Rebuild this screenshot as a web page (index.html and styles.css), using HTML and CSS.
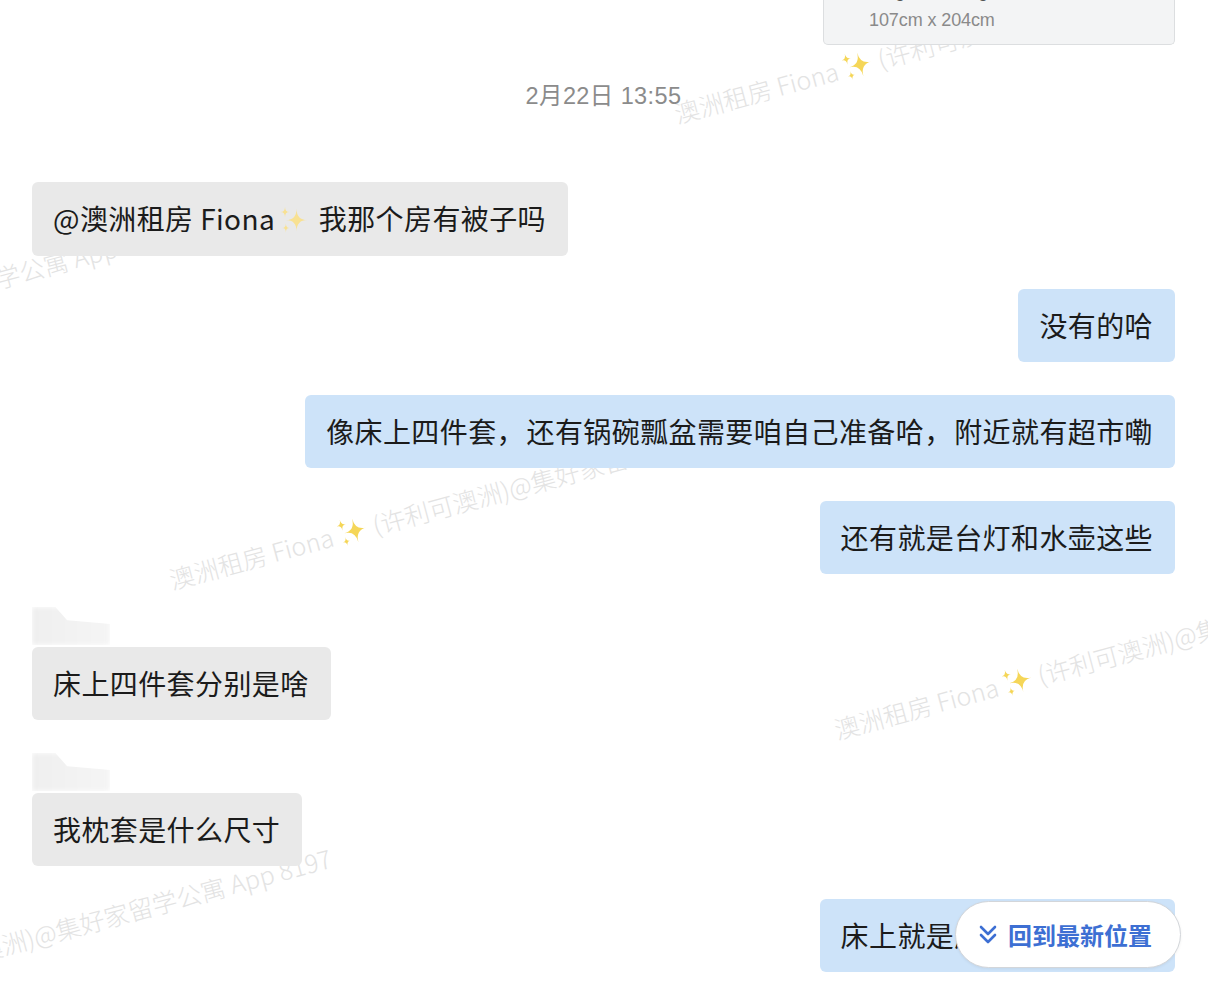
FILE: index.html
```html
<!DOCTYPE html>
<html lang="zh-CN">
<head>
  <meta charset="UTF-8" />
  <meta name="viewport" content="width=device-width, initial-scale=1.0"/>
  <title>聊天记录</title>
  <link rel="stylesheet" href="styles.css">
</head>
<body>

<div class="page">

  <!-- watermark tiles, sit behind the chat -->
  <div class="watermark">
    <div class="wm" style="left:675px; top:97px">澳洲租房 Fiona<svg class="spark" viewBox="0 0 36 36"><path d="M22 5Q22 18 34 18Q22 18 22 31Q22 18 10 18Q22 18 22 5Z"/><path d="M9 3Q9 9 14 9Q9 9 9 15Q9 9 4 9Q9 9 9 3Z"/><path d="M10 22Q10 27 14 27Q10 27 10 32Q10 27 6 27Q10 27 10 22Z"/></svg> (许利可澳洲)@集好家留学公寓 App 8197</div>
    <div class="wm" style="left:-462px; top:385px">澳洲租房 Fiona<svg class="spark" viewBox="0 0 36 36"><path d="M22 5Q22 18 34 18Q22 18 22 31Q22 18 10 18Q22 18 22 5Z"/><path d="M9 3Q9 9 14 9Q9 9 9 15Q9 9 4 9Q9 9 9 3Z"/><path d="M10 22Q10 27 14 27Q10 27 10 32Q10 27 6 27Q10 27 10 22Z"/></svg> (许利可澳洲)@集好家留学公寓 App 8197</div>
    <div class="wm" style="left:170px; top:563px">澳洲租房 Fiona<svg class="spark" viewBox="0 0 36 36"><path d="M22 5Q22 18 34 18Q22 18 22 31Q22 18 10 18Q22 18 22 5Z"/><path d="M9 3Q9 9 14 9Q9 9 9 15Q9 9 4 9Q9 9 9 3Z"/><path d="M10 22Q10 27 14 27Q10 27 10 32Q10 27 6 27Q10 27 10 22Z"/></svg> (许利可澳洲)@集好家留学公寓 App 8197</div>
    <div class="wm" style="left:835px; top:713px">澳洲租房 Fiona<svg class="spark" viewBox="0 0 36 36"><path d="M22 5Q22 18 34 18Q22 18 22 31Q22 18 10 18Q22 18 22 5Z"/><path d="M9 3Q9 9 14 9Q9 9 9 15Q9 9 4 9Q9 9 9 3Z"/><path d="M10 22Q10 27 14 27Q10 27 10 32Q10 27 6 27Q10 27 10 22Z"/></svg> (许利可澳洲)@集好家留学公寓 App 8197</div>
    <div class="wm" style="left:-305px; top:1011px">澳洲租房 Fiona<svg class="spark" viewBox="0 0 36 36"><path d="M22 5Q22 18 34 18Q22 18 22 31Q22 18 10 18Q22 18 22 5Z"/><path d="M9 3Q9 9 14 9Q9 9 9 15Q9 9 4 9Q9 9 9 3Z"/><path d="M10 22Q10 27 14 27Q10 27 10 32Q10 27 6 27Q10 27 10 22Z"/></svg> (许利可澳洲)@集好家留学公寓 App 8197</div>
  </div>

  <div class="chat">

    <div class="row right">
      <div class="card">
        <div class="card-title">Single bedding</div>
        <div class="card-size">107cm x 204cm</div>
      </div>
    </div>

    <div class="time">2月22日 13:55</div>

    <div class="row left first">
      <div class="bubble">@澳洲租房 Fiona<svg class="emoji" viewBox="0 0 36 36"><path d="M22 5Q22 18 34 18Q22 18 22 31Q22 18 10 18Q22 18 22 5Z"/><path d="M9 3Q9 9 14 9Q9 9 9 15Q9 9 4 9Q9 9 9 3Z"/><path d="M10 22Q10 27 14 27Q10 27 10 32Q10 27 6 27Q10 27 10 22Z"/></svg> 我那个房有被子吗</div>
    </div>

    <div class="row right">
      <div class="bubble">没有的哈</div>
    </div>

    <div class="row right">
      <div class="bubble">像床上四件套<span class="punct">，</span>还有锅碗瓢盆需要咱自己准备哈<span class="punct">，</span>附近就有超市嘞</div>
    </div>

    <div class="row right">
      <div class="bubble">还有就是台灯和水壶这些</div>
    </div>

    <div class="row left">
      <div class="sender"></div>
      <div class="bubble">床上四件套分别是啥</div>
    </div>

    <div class="row left">
      <div class="sender"></div>
      <div class="bubble">我枕套是什么尺寸</div>
    </div>

    <div class="row right">
      <div class="bubble">床上就是床单被罩枕套哈</div>
    </div>

  </div>

  <button class="latest">
    <svg viewBox="0 0 20 22"><path d="M3 3l7 7 7-7M3 11l7 7 7-7"/></svg>
    回到最新位置
  </button>

</div>

</body>
</html>
```

FILE: styles.css
```css
body {
  margin: 0;
  background: #fff;
  font-family: "Liberation Sans", "Noto Sans CJK SC", sans-serif;
  color: #1b1b1b;
  overflow: hidden;
}

.page {
  position: relative;
  width: 1208px;
  height: 994px;
  overflow: hidden;
}

.watermark {
  position: absolute;
  inset: 0;
  z-index: 0;
}

.wm {
  position: absolute;
  white-space: nowrap;
  font-family: "Noto Sans CJK SC", sans-serif;
  font-size: 25px;
  font-weight: 300;
  line-height: 30px;
  color: #e3e3e3;
  transform: rotate(-15deg);
  transform-origin: 0 50%;
}

.wm .spark {
  width: 34px;
  height: 34px;
  vertical-align: -7px;
  margin-left: 2px;
  fill: #f4d246;
  opacity: 0.9;
}

.chat {
  position: relative;
  z-index: 1;
  display: flex;
  flex-direction: column;
  padding: 0 33px 0 32px;
}

.row {
  display: flex;
  flex-direction: column;
  margin-top: 33px;
}

.row.left {
  align-items: flex-start;
}

.row.right {
  align-items: flex-end;
}

.row.first {
  margin-top: 71px;
}

.row.right:first-child {
  margin-top: 0;
}

.card {
  width: 305px;
  margin-top: -44px;
  padding: 23px 0 12px 45px;
  background: #f3f4f5;
  border: 1px solid #dcdee0;
  border-top: none;
  border-radius: 0 0 5px 5px;
}

.card-title {
  font-size: 18px;
  line-height: 24px;
  color: #555;
}

.card-size {
  margin-top: 5px;
  font-size: 18px;
  line-height: 24px;
  color: #8a8a8a;
  letter-spacing: -0.1px;
}

.time {
  margin-top: 36px;
  text-align: center;
  font-size: 23.5px;
  line-height: 30px;
  color: #8b8b8b;
  letter-spacing: 0.4px;
}

.bubble {
  font-family: "Noto Sans CJK SC", sans-serif;
  font-size: 28px;
  line-height: 33px;
  letter-spacing: 0.4px;
  padding: 20px 22px 20px 21px;
  border-radius: 6px;
  white-space: nowrap;
}

.left .bubble {
  background: #e9e9e9;
}

.right .bubble {
  background: #cde3f9;
}

.bubble .emoji {
  width: 32px;
  height: 32px;
  vertical-align: -6px;
  margin: 0 3px 0 2px;
  fill: #f8e192;
}

.punct {
  letter-spacing: 2px;
}

.sender {
  width: 80px;
  height: 40px;
}

.sender::before {
  content: "";
  display: block;
  width: 78px;
  height: 38px;
  background: linear-gradient(90deg, #efefef, #f5f5f5);
  clip-path: polygon(0 0, 30% 0, 45% 35%, 100% 45%, 100% 100%, 0 100%);
  filter: blur(2px);
}

.latest {
  position: absolute;
  right: 27px;
  bottom: 26px;
  z-index: 2;
  width: 226px;
  height: 67px;
  display: flex;
  align-items: center;
  gap: 10px;
  padding: 0 0 0 22px;
  background: #fff;
  border: 1.5px solid #d3d6da;
  border-radius: 34px;
  box-shadow: 0 1px 3px rgba(0, 0, 0, 0.06);
  font-family: "Noto Sans CJK SC", sans-serif;
  font-size: 24px;
  font-weight: bold;
  color: #3d6fd3;
  cursor: pointer;
}

.latest svg {
  width: 20px;
  height: 22px;
  fill: none;
  stroke: #3d6fd3;
  stroke-width: 2.6;
  stroke-linecap: round;
  stroke-linejoin: round;
}
```
